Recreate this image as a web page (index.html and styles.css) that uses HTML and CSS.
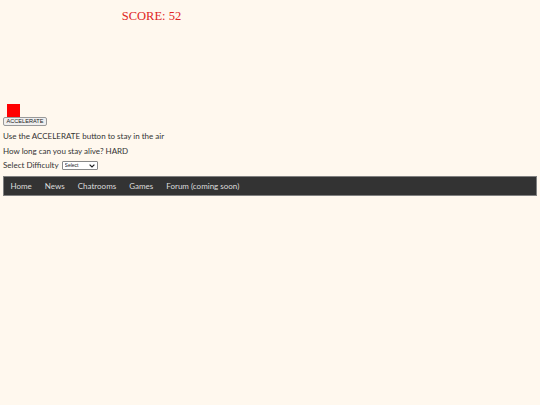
FILE: index.html
```html
<!DOCTYPE html>
<html>
<head>
<meta charset="utf-8">
<link rel="stylesheet" href="styles.css">
</head>
<body>
<div class="game">
  <div class="score">SCORE: 52</div>
  <div class="player"></div>
</div>
<button class="accel">ACCELERATE</button>
<p class="line first">Use the ACCELERATE button to stay in the air</p>
<p class="line">How long can you stay alive? HARD</p>
<div class="line diff">
  <span>Select Difficulty</span>
  <span class="selwrap">
    <select class="sel"><option>Select</option></select>
    <svg class="arrow" width="6" height="4" viewBox="0 0 6 4"><path d="M0.6 0.6 L3 3 L5.4 0.6" fill="none" stroke="#222" stroke-width="1.2"/></svg>
  </span>
</div>
<nav class="nav">
  <a>Home</a>
  <a>News</a>
  <a>Chatrooms</a>
  <a>Games</a>
  <a>Forum (coming soon)</a>
</nav>
</body>
</html>
```

FILE: styles.css
```css
html, body {
  margin: 0;
  background: #fff8ee;
}
body {
  padding: 0 3px;
  font-family: "Lato", "Open Sans", sans-serif;
  font-size: 8px;
  color: #333;
}
.game {
  width: 300px;
  height: 117px;
  display: flex;
  flex-direction: column;
  justify-content: space-between;
}
.score {
  margin-top: 9px;
  margin-right: 3px;
  text-align: center;
  font-family: "Liberation Serif", serif;
  font-size: 12.5px;
  color: #e02424;
}
.player {
  width: 13px;
  height: 13px;
  margin-left: 4px;
  background: #ff0000;
}
.accel {
  display: block;
  margin: 0;
  height: 9px;
  width: 44px;
  padding: 0;
  font-family: "Liberation Sans", sans-serif;
  font-size: 5.6px;
  line-height: 7px;
  color: #222;
  background: #efefef;
  border: 1px solid #999;
  border-radius: 2px;
}
.line {
  margin: 0;
  height: 14.5px;
  line-height: 14.5px;
}
.first {
  margin-top: 3px;
}
.diff {
  display: flex;
  align-items: center;
  gap: 3px;
}
.selwrap {
  position: relative;
  display: inline-block;
  width: 36px;
  height: 9px;
}
.sel {
  appearance: none;
  -webkit-appearance: none;
  display: block;
  width: 36px;
  height: 9px;
  margin: 0;
  padding: 0 0 0 2px;
  font-family: "Liberation Sans", sans-serif;
  font-size: 5px;
  line-height: 7px;
  color: #222;
  border: 1px solid #888;
  border-radius: 1px;
  background: #fff;
}
.arrow {
  position: absolute;
  right: 3px;
  top: 3px;
}
.nav {
  margin-top: 3px;
  display: flex;
  align-items: center;
  height: 18px;
  background: #333;
  border: 1px solid #808080;
}
.nav a {
  color: #dddddd;
  padding: 0 6.5px;
  font-size: 8px;
}
```
